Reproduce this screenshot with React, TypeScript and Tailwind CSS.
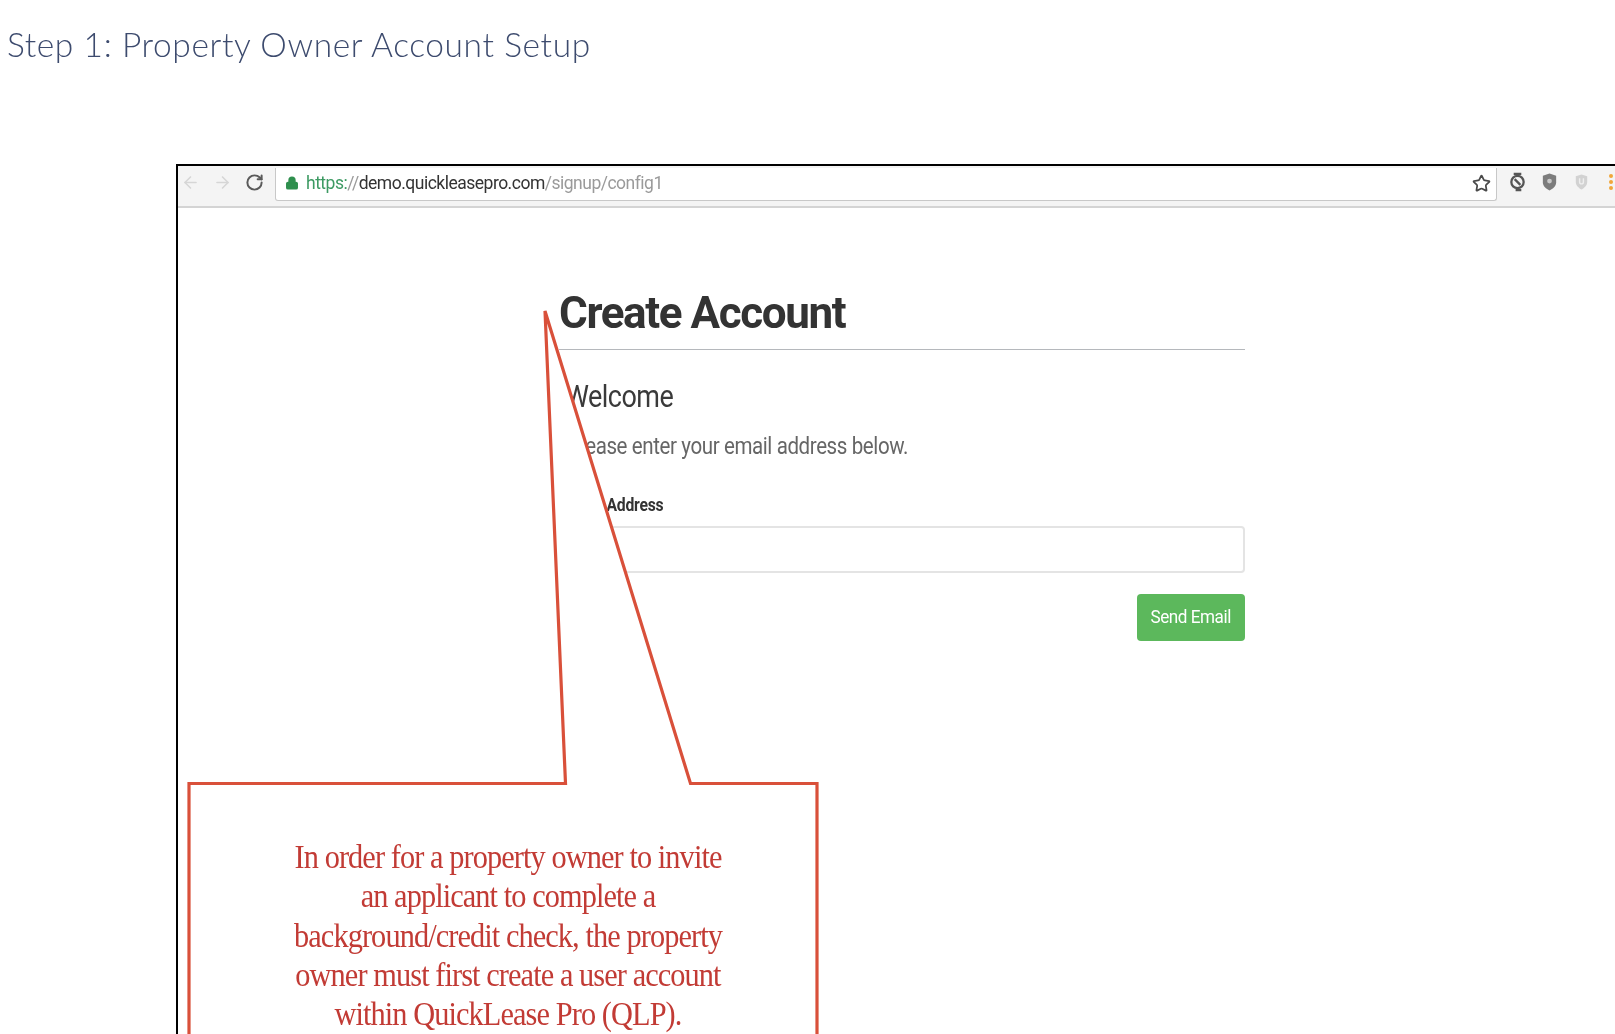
import { ArrowLeft, ArrowRight, Lock, RotateCw, Star } from "lucide-react";

// Browser toolbar of the embedded screenshot
function Toolbar() {
  return (
    <div className="flex h-[42px] shrink-0 items-start border-b-2 border-[#d4d4d4] bg-[#f4f4f4] pl-[3px] pt-[2px] blur-[0.4px]">
      <ArrowLeft className="mt-[5px] h-[19px] w-[19px] text-[#d6d6d6]" strokeWidth={2} />
      <ArrowRight className="ml-[13px] mt-[5px] h-[19px] w-[19px] text-[#d6d6d6]" strokeWidth={2} />
      <RotateCw className="ml-[13px] mt-[5px] h-[19px] w-[19px] text-[#5a5a5a]" strokeWidth={2.5} />
      <div className="ml-[11px] flex h-[33px] w-[1222px] items-center rounded-b-[3px] border-r border-b border-l border-[#c8c8c8] bg-white pb-[2px] pl-[9px] pr-[5px] font-['Roboto',sans-serif] text-[17.5px] tracking-[-0.5px]">
        <Lock className="h-[14px] w-[14px] fill-[#2f8f4e] text-[#2f8f4e]" strokeWidth={2.5} />
        <span className="ml-[7px] text-[#3d9a63]">https:</span>
        <span className="text-[#9a9a9a]">//</span>
        <span className="text-[#333333]">demo.quickleasepro.com</span>
        <span className="text-[#9a9a9a]">/signup/config1</span>
        <Star className="ml-auto h-[19px] w-[19px] text-[#4a4a4a]" strokeWidth={2.2} />
      </div>
      <div className="ml-[11px] mt-[4px] flex items-center gap-[13px]">
        <svg viewBox="0 0 20 20" className="h-[20px] w-[19px]" fill="none" stroke="#555555" strokeWidth="2.4">
          <circle cx="10" cy="10" r="6.5" />
          <path d="M6 1.5h8M8 18.500h6M7 7l6 6" />
        </svg>
        <svg viewBox="0 0 20 20" className="h-[20px] w-[19px]">
          <path d="M10 1l7 2.500v7c0 4-3.500 6.500-7 8.500-3.500-2-7-4.500-7-8.500v-7z" fill="#7c7c7c" />
          <circle cx="10" cy="9" r="2.500" fill="#c9c9c9" />
        </svg>
        <svg viewBox="0 0 20 20" className="h-[20px] w-[19px]">
          <path d="M10 2l6 2v6c0 4-3 6-6 8-3-2-6-4-6-8v-6z" fill="#d2d2d2" />
          <path d="M8 6v4a2 2 0 0 0 4 0v-4" fill="none" stroke="#eeeeee" strokeWidth="1.500" />
        </svg>
        <div className="ml-[5px] flex flex-col gap-[2px]">
          <span className="h-[4px] w-[4px] rounded-full bg-[#f0a63a]" />
          <span className="h-[4px] w-[4px] rounded-full bg-[#f0a63a]" />
          <span className="h-[4px] w-[4px] rounded-full bg-[#f0a63a]" />
        </div>
      </div>
    </div>
  );
}

function SignupForm() {
  return (
    <div className="ml-[381px] w-[686px] font-['Roboto',sans-serif] blur-[0.5px]">
      <h1 className="mt-[75px] h-[67px] border-b border-[#b5b8bc] text-[44px] leading-[60px] font-bold tracking-[-1.4px] text-[#333333]">
        Create Account
      </h1>
      <div className="pl-[6px]">
        <h2 className="mt-[27px] origin-left scale-x-[0.87] text-[31px] leading-[40px] tracking-[-0.6px] text-[#3a3a3a]">
          Welcome
        </h2>
        <p className="mt-[13px] ml-[3px] origin-left scale-x-[0.873] text-[23.5px] leading-[33px] tracking-[-0.45px] text-[#666666]">
          Please enter your email address below.
        </p>
        <label className="mt-[30px] block origin-left scale-x-[0.9] text-[17.5px] leading-[24px] font-bold tracking-[-0.3px] text-[#333333]">
          Email Address
        </label>
      </div>
      <div className="mt-[9px] h-[47px] rounded-[4px] border-2 border-[#e4e4e4] bg-white" />
      <div className="mt-[21px] flex justify-end">
        <button
          type="button"
          className="h-[47px] w-[108px] rounded-[4px] bg-[#5cb85c] text-white"
        >
          <span className="inline-block scale-x-[0.9] text-[19px] tracking-[-0.5px]">Send Email</span>
        </button>
      </div>
    </div>
  );
}

export default function App() {
  return (
    <div className="relative h-[1034px] w-[1615px] overflow-hidden bg-white">
      <h1 className="pl-[7px] pt-[22px] font-['Lato',sans-serif] text-[33.500px] leading-[44px] font-light tracking-[0.6px] text-[#3d4b6e] blur-[0.3px]">
        Step 1: Property Owner Account Setup
      </h1>

      <div className="ml-[176px] mt-[98px] flex h-[900px] w-[1500px] flex-col border-t-2 border-l-2 border-black">
        <Toolbar />
        <SignupForm />
      </div>

      {/* Red callout laid over the screenshot */}
      <svg className="absolute top-0 left-0 h-[1034px] w-[1615px]" viewBox="0 0 1615 1034">
        <path
          d="M189 1040V783.500H565.500L545 311L690.500 783.500H817V1040"
          fill="#ffffff"
          stroke="#d9503a"
          strokeWidth="3.200"
        />
      </svg>
      <div className="absolute top-[838px] left-[243px] w-[530px] scale-x-[0.92] text-center font-['Liberation_Serif',serif] text-[33px] leading-[39.3px] tracking-[-1px] text-[#c23b35] blur-[0.4px]">
        <p>In order for a property owner to invite</p>
        <p>an applicant to complete a</p>
        <p>background/credit check, the property</p>
        <p>owner must first create a user account</p>
        <p>within QuickLease Pro (QLP).</p>
      </div>
    </div>
  );
}
